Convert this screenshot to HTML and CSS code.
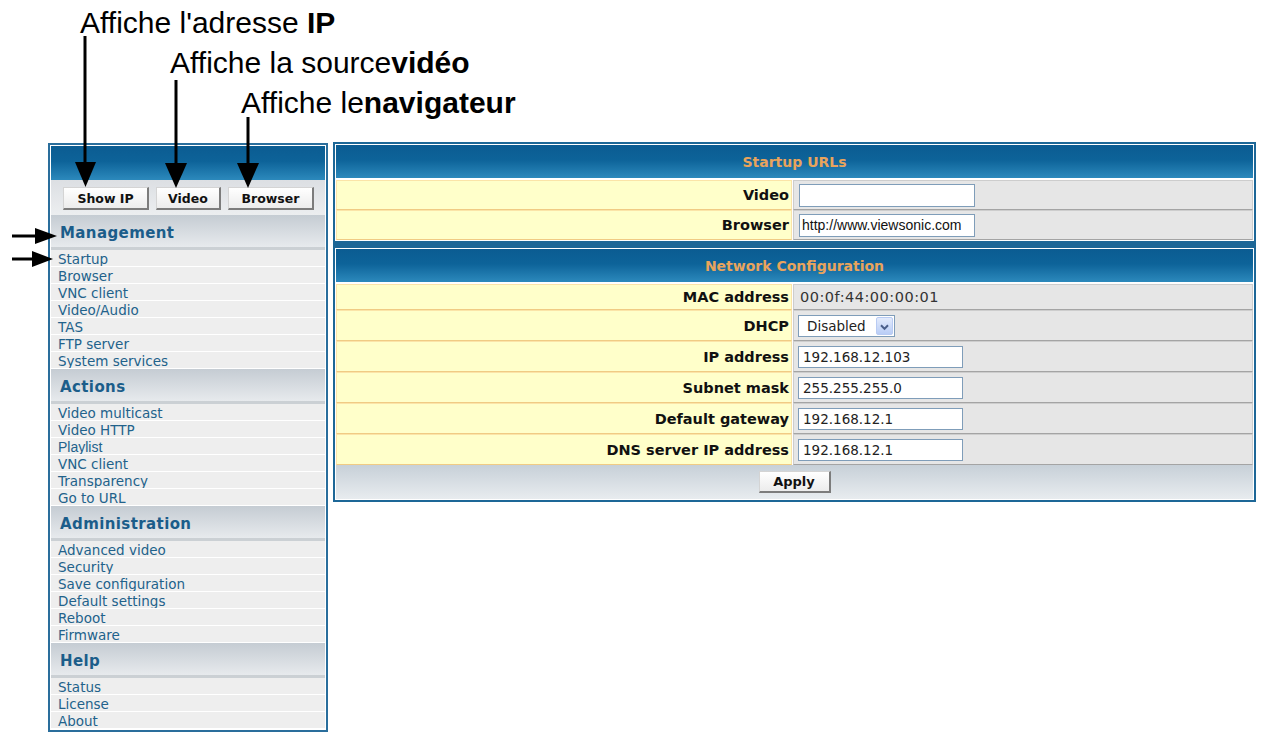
FILE: index.html
```html
<html>
    <head>
        <link rel="stylesheet" href="styles.css">
    </head>
    <body>
        <div class="notes">
            <div class="note note-ip">Affiche l'adresse <b>IP</b></div>
            <div class="note note-video">Affiche la source<b>vidéo</b></div>
            <div class="note note-browser">Affiche le<b>navigateur</b></div>
        </div>

        <div class="layout">
            <div class="sidebar">
                <div class="side-top"></div>
                <div class="side-buttons">
                    <button class="btn btn-ip">Show IP</button>
                    <button class="btn btn-video">Video</button>
                    <button class="btn btn-browser">Browser</button>
                </div>

                <div class="side-title">Management</div>
                <a class="side-link">Startup</a>
                <a class="side-link">Browser</a>
                <a class="side-link">VNC client</a>
                <a class="side-link">Video/Audio</a>
                <a class="side-link">TAS</a>
                <a class="side-link">FTP server</a>
                <a class="side-link">System services</a>

                <div class="side-title">Actions</div>
                <a class="side-link">Video multicast</a>
                <a class="side-link">Video HTTP</a>
                <a class="side-link side-link-arial">Playlist</a>
                <a class="side-link">VNC client</a>
                <a class="side-link">Transparency</a>
                <a class="side-link">Go to URL</a>

                <div class="side-title">Administration</div>
                <a class="side-link">Advanced video</a>
                <a class="side-link">Security</a>
                <a class="side-link">Save configuration</a>
                <a class="side-link">Default settings</a>
                <a class="side-link">Reboot</a>
                <a class="side-link">Firmware</a>

                <div class="side-title">Help</div>
                <a class="side-link">Status</a>
                <a class="side-link">License</a>
                <a class="side-link">About</a>
            </div>

            <div class="main">
                <div class="panel panel-urls">
                    <div class="panel-head">Startup URLs</div>
                    <div class="label">Video</div>
                    <div class="value"><input class="field" type="text" value=""></div>
                    <div class="label">Browser</div>
                    <div class="value"><input class="field" type="text" value="http://www.viewsonic.com"></div>
                </div>

                <div class="panel panel-net">
                    <div class="panel-head">Network Configuration</div>
                    <div class="label">MAC address</div>
                    <div class="value"><span class="mac">00:0f:44:00:00:01</span></div>
                    <div class="label">DHCP</div>
                    <div class="value">
                        <div class="select">
                            <span class="select-text">Disabled</span>
                            <span class="select-drop">
                                <svg width="17" height="18" viewBox="0 0 17 18">
                                    <path d="M4.5 7 L8.5 11 L12.5 7" fill="none" stroke="#4a5f8a" stroke-width="2.2"/>
                                </svg>
                            </span>
                        </div>
                    </div>
                    <div class="label">IP address</div>
                    <div class="value"><input class="field field-ip" type="text" value="192.168.12.103"></div>
                    <div class="label">Subnet mask</div>
                    <div class="value"><input class="field field-ip" type="text" value="255.255.255.0"></div>
                    <div class="label">Default gateway</div>
                    <div class="value"><input class="field field-ip" type="text" value="192.168.12.1"></div>
                    <div class="label">DNS server IP address</div>
                    <div class="value"><input class="field field-ip" type="text" value="192.168.12.1"></div>
                    <div class="apply">
                        <button class="btn btn-apply">Apply</button>
                    </div>
                </div>
            </div>
        </div>

        <!-- callout arrows drawn over the screenshot -->
        <svg class="arrows" width="1265" height="740" viewBox="0 0 1265 740">
            <g stroke="#000" stroke-width="3">
                <line x1="85" y1="36" x2="85" y2="164"/>
                <line x1="176" y1="80" x2="176" y2="164"/>
                <line x1="248" y1="117" x2="248" y2="164"/>
                <line x1="12" y1="236" x2="37" y2="236"/>
                <line x1="12" y1="259" x2="34" y2="259"/>
            </g>
            <g fill="#000">
                <polygon points="75,162 96,162 85.5,187"/>
                <polygon points="165,163 187,163 176,188"/>
                <polygon points="237,163 259,163 248,188"/>
                <polygon points="35,228 35,244 57,236"/>
                <polygon points="32,251 32,267 53,259"/>
            </g>
        </svg>
    </body>
</html>
```

FILE: styles.css
```css
body{
    margin:0;
    background:#fff;
    position:relative;
    font-family:"DejaVu Sans", Verdana, sans-serif;
    color:#111;
}

/* annotation text above the screenshot */
.notes{
    height:142px;
    box-sizing:border-box;
    padding-top:3px;
    font-family:"Liberation Sans", Arial, sans-serif;
    font-size:30px;
    line-height:40px;
    color:#000;
}
.note{
    white-space:nowrap;
}
.note-ip{ margin-left:80px; }
.note-video{ margin-left:170px; }
.note-browser{ margin-left:241px; }

.arrows{
    position:absolute;
    top:0;
    left:0;
    pointer-events:none;
}

.layout{
    display:flex;
    align-items:flex-start;
    gap:5px;
    padding-left:48px;
}

/* left menu */
.sidebar{
    width:280px;
    box-sizing:border-box;
    border:2px solid #2a6e9c;
    padding:1px;
    background:#fff;
    margin-top:1px;
}
.side-top{
    height:34px;
    background:linear-gradient(#0b5c92 0%, #0d6399 45%, #2c89bc 100%);
}
.side-buttons{
    height:35px;
    box-sizing:border-box;
    padding:7px 0 0 12px;
    display:flex;
    gap:7px;
    background:linear-gradient(#dcdfe3, #eceef0);
}
.btn{
    height:23px;
    padding:0;
    box-sizing:border-box;
    background:linear-gradient(#ffffff, #ececec);
    border:1px solid #d4d4d4;
    border-right:2px solid #7c7c7c;
    border-bottom:2px solid #7c7c7c;
    font-family:"DejaVu Sans", Verdana, sans-serif;
    font-weight:bold;
    font-size:12.5px;
    color:#111;
}
.btn-ip{ width:86px; }
.btn-video{ width:65px; }
.btn-browser{ width:86px; }

.side-title{
    height:35px;
    box-sizing:border-box;
    border-bottom:3px solid #cbd0d4;
    background:linear-gradient(#c5ccd3, #e7eaed);
    padding-left:9px;
    font-weight:bold;
    font-size:15px;
    letter-spacing:.4px;
    line-height:36px;
    color:#1b5d8a;
    overflow:hidden;
}
.side-link{
    display:block;
    height:17px;
    box-sizing:border-box;
    border-bottom:1px solid #fff;
    background:#eeeeee;
    padding-left:7px;
    font-size:13.5px;
    line-height:18px;
    color:#22628b;
    white-space:nowrap;
    overflow:hidden;
}
.side-link-arial{
    font-family:"Liberation Sans", Arial, sans-serif;
    font-size:14px;
}

/* right side forms */
.main{
    width:923px;
    box-sizing:border-box;
    border:2px solid #1d6797;
    background:#1d6797;
    display:flex;
    flex-direction:column;
    gap:7px;
}
.panel{
    background:#fff;
    padding:1px;
    display:grid;
    grid-template-columns:456px 1fr;
    column-gap:1px;
}
.panel-urls{
    grid-template-rows:35px 30px 30px;
}
.panel-net{
    grid-template-rows:35px 26px 31px 31px 31px 31px 31px 34px;
}
.panel-head{
    grid-column:1 / -1;
    box-sizing:border-box;
    border-bottom:2px solid #fff;
    background:linear-gradient(#0b5c92 0%, #0d6399 45%, #2c89bc 100%);
    text-align:center;
    line-height:34px;
    font-weight:bold;
    font-size:14px;
    color:#e9a45c;
}
.label{
    box-sizing:border-box;
    background:#ffffca;
    border:1px solid #fbe4a8;
    border-bottom-color:#f0cb84;
    padding-right:2px;
    display:flex;
    align-items:center;
    justify-content:flex-end;
    font-weight:bold;
    font-size:14.5px;
    color:#111;
    white-space:nowrap;
}
.value{
    box-sizing:border-box;
    background:#e6e6e6;
    border:1px solid #cdcdcd;
    border-bottom-color:#a4a4a4;
    padding-left:4px;
    display:flex;
    align-items:center;
}
.field{
    width:176px;
    height:23px;
    box-sizing:border-box;
    margin-left:1px;
    border:1px solid #7f9db9;
    padding:0 2px;
    background:#fff;
    font-family:"Liberation Sans", Arial, sans-serif;
    font-size:14px;
    color:#111;
    outline:none;
}
.field-ip{
    width:165px;
    height:22px;
    margin-left:0;
    padding:0 4px;
    font-family:"DejaVu Sans", Verdana, sans-serif;
    font-size:13.5px;
    color:#222;
}
.mac{
    padding-left:2px;
    font-size:14.5px;
    letter-spacing:.5px;
    color:#333;
}
.select{
    width:97px;
    height:22px;
    box-sizing:border-box;
    border:1px solid #7f9db9;
    background:#fff;
    display:flex;
    align-items:center;
    justify-content:space-between;
    padding:0 1px 0 8px;
}
.select-text{
    font-size:13.5px;
    color:#222;
}
.select-drop{
    width:17px;
    height:18px;
    box-sizing:border-box;
    border:1px solid #b9cbf3;
    border-radius:2px;
    background:linear-gradient(#e3ebfc, #b9cdf6);
    display:flex;
}
.apply{
    grid-column:1 / -1;
    background:linear-gradient(#c7d0d8, #e8ecef);
    display:flex;
    justify-content:center;
    align-items:center;
}
.btn-apply{
    width:72px;
    height:22px;
    font-size:13px;
}
```
